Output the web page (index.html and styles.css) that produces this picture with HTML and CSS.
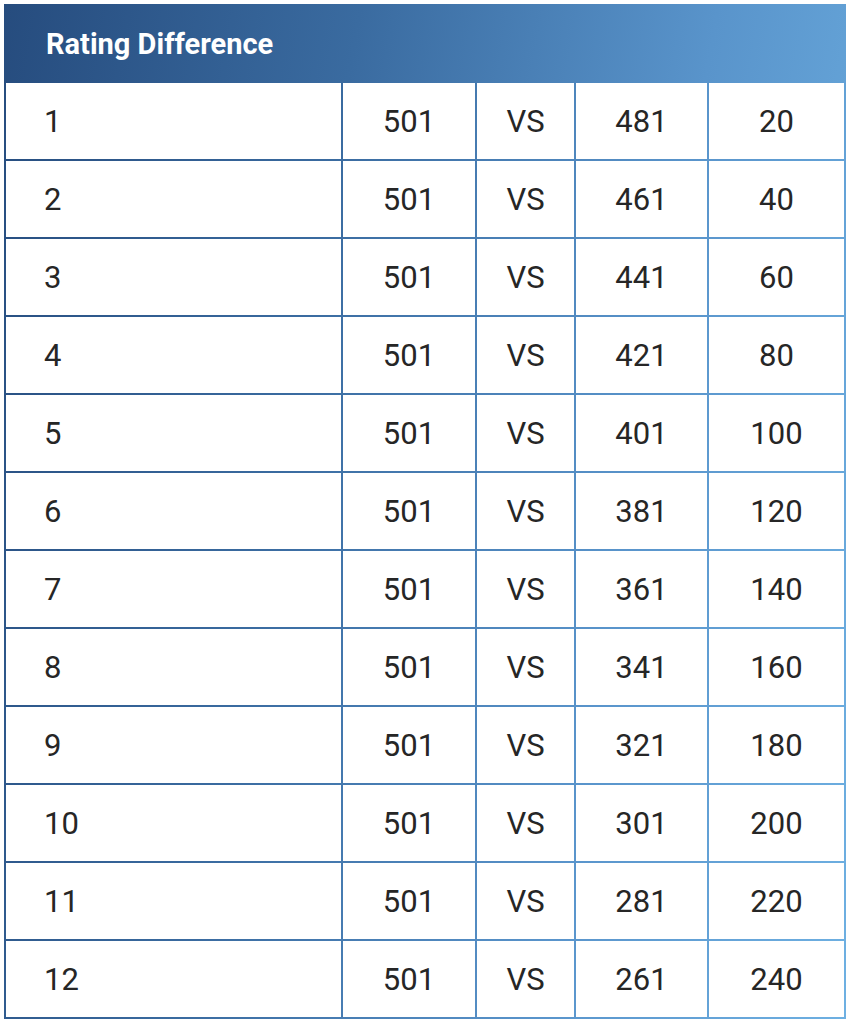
FILE: index.html
```html
<!DOCTYPE html>
<html>
<head>
<meta charset="utf-8">
<link rel="stylesheet" href="styles.css">
</head>
<body>
<div class="table">
  <div class="head">Rating Difference</div>
  <div class="cell first">1</div><div class="cell">501</div><div class="cell">VS</div><div class="cell">481</div><div class="cell">20</div>
  <div class="cell first">2</div><div class="cell">501</div><div class="cell">VS</div><div class="cell">461</div><div class="cell">40</div>
  <div class="cell first">3</div><div class="cell">501</div><div class="cell">VS</div><div class="cell">441</div><div class="cell">60</div>
  <div class="cell first">4</div><div class="cell">501</div><div class="cell">VS</div><div class="cell">421</div><div class="cell">80</div>
  <div class="cell first">5</div><div class="cell">501</div><div class="cell">VS</div><div class="cell">401</div><div class="cell">100</div>
  <div class="cell first">6</div><div class="cell">501</div><div class="cell">VS</div><div class="cell">381</div><div class="cell">120</div>
  <div class="cell first">7</div><div class="cell">501</div><div class="cell">VS</div><div class="cell">361</div><div class="cell">140</div>
  <div class="cell first">8</div><div class="cell">501</div><div class="cell">VS</div><div class="cell">341</div><div class="cell">160</div>
  <div class="cell first">9</div><div class="cell">501</div><div class="cell">VS</div><div class="cell">321</div><div class="cell">180</div>
  <div class="cell first">10</div><div class="cell">501</div><div class="cell">VS</div><div class="cell">301</div><div class="cell">200</div>
  <div class="cell first">11</div><div class="cell">501</div><div class="cell">VS</div><div class="cell">281</div><div class="cell">220</div>
  <div class="cell first">12</div><div class="cell">501</div><div class="cell">VS</div><div class="cell">261</div><div class="cell">240</div>
</div>
</body>
</html>
```
FILE: styles.css
```css
html, body {
  margin: 0;
  padding: 0;
  background: #ffffff;
}
body {
  padding: 4px 5px 4px 4px;
  font-family: Roboto, "Liberation Sans", sans-serif;
}
.table {
  display: grid;
  grid-template-columns: 335px 132px 97px 131px 135px;
  grid-template-rows: 75px;
  grid-auto-rows: 76px;
  gap: 2px;
  padding: 2px;
  width: 838px;
  background: linear-gradient(100deg, #264c7e 0%, #3a6ba0 35%, #5994cb 70%, #6eb0e2 100%);
}
.head {
  grid-column: 1 / -1;
  display: flex;
  align-items: center;
  padding-left: 40px;
  color: #ffffff;
  font-size: 29px;
  font-weight: 700;
}
.cell {
  background: #ffffff;
  display: flex;
  align-items: center;
  justify-content: center;
  font-size: 31px;
  color: #262626;
}
.cell.first {
  justify-content: flex-start;
  padding-left: 38px;
}
```
